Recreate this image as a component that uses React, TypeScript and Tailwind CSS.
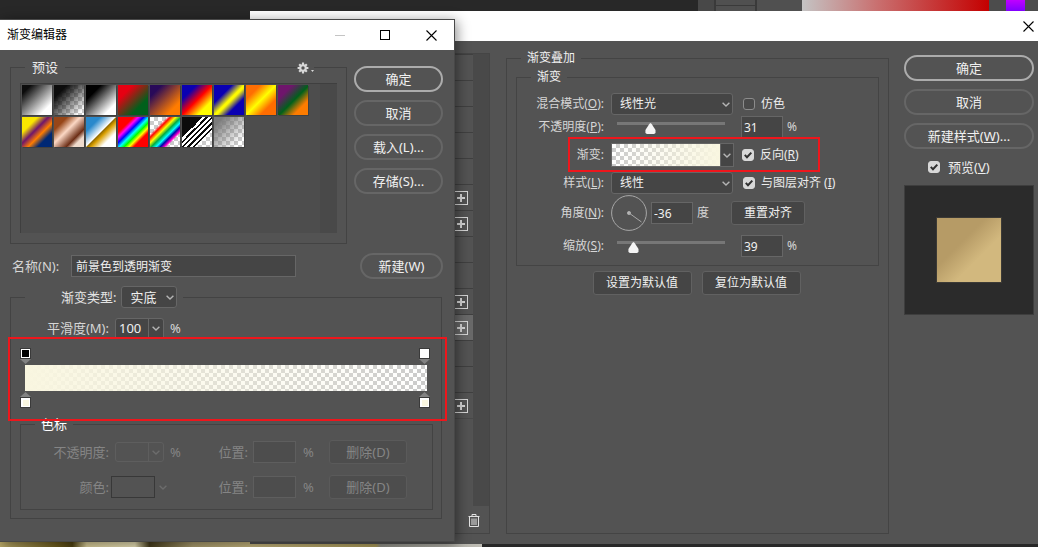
import { ReactNode, useState } from "react";
import { clsx } from "clsx";

const PRESETS = [
  { name: "前景色到背景色渐变", fill: "bg-[linear-gradient(135deg,#0c0c0c_15%,#fff_80%)]" },
  { name: "前景色到透明渐变", fill: "bg-[linear-gradient(135deg,#0c0c0c_22%,#0c0c0c00_90%)]" },
  { name: "黑,白渐变", fill: "bg-[linear-gradient(135deg,#000_25%,#fff_80%)]" },
  { name: "红,绿渐变", fill: "bg-[linear-gradient(135deg,#e60012_25%,#00601b_72%)]" },
  { name: "紫,橙渐变", fill: "bg-[linear-gradient(135deg,#290a59_20%,#ff7c00_78%)]" },
  { name: "蓝,红,黄渐变", fill: "bg-[linear-gradient(135deg,#0a00b2_24%,#ff0000_50%,#fffc00_76%)]" },
  { name: "蓝,黄,蓝渐变", fill: "bg-[linear-gradient(135deg,#0a00b2_30%,#fdfa01_50%,#fdfa01_54%,#0a00b2_72%)]" },
  { name: "橙,黄,橙渐变", fill: "bg-[linear-gradient(135deg,#ff6e02_24%,#ffff00_50%,#ff6d00_74%)]" },
  { name: "紫,绿,橙渐变", fill: "bg-[linear-gradient(135deg,#6f156c_24%,#00601b_52%,#fd7c00_76%)]" },
  { name: "黄,紫,橙,蓝渐变", fill: "bg-[linear-gradient(135deg,#f9e600_26%,#6f156c_44%,#fd7c00_60%,#002874_76%)]" },
  { name: "铜色渐变", fill: "bg-[linear-gradient(135deg,#974618_22%,#fbd8c5_44%,#6c2e16_70%,#efdbcd_82%)]" },
  { name: "铬黄渐变", fill: "bg-[linear-gradient(135deg,#2989cc_24%,#fff_49%,#906a00_51%,#d99f00_58%,#fff_76%)]" },
  { name: "色谱", fill: "bg-[linear-gradient(135deg,#f00_26%,#f0f_34%,#00f_43%,#0ff_52%,#0f0_60%,#ff0_68%,#f00_76%)]" },
  { name: "透明彩虹渐变", fill: "bg-[linear-gradient(135deg,#f000_28%,#f00_34%,#ff0_43%,#0a4_52%,#0ff_60%,#00a_67%,#f0c_74%,#f0c0_78%)]" },
  { name: "透明条纹渐变", fill: "bg-[linear-gradient(135deg,#0c0c0c_35%,#fff_35%,#fff_40%,#0c0c0c_40%,#0c0c0c_44%,#fff_44%,#fff_49%,#0c0c0c_49%,#0c0c0c_53%,#fff_53%,#fff_58%,#0c0c0c_58%,#0c0c0c_62%,#fff_62%,#fff_67%,#0c0c0c_67%,#0c0c0c_71%,transparent_71%)]" },
  { name: "中灰密度", fill: "bg-[linear-gradient(135deg,#7c7c7c_15%,#7c7c7c00_85%)]" },
];

// rows of the layer effect list, "add" ones can be duplicated
const EFFECT_ROWS = [
  { add: false }, { add: false }, { add: false }, { add: false }, { add: false },
  { add: true }, { add: true }, { add: false }, { add: false }, { add: true },
  { add: true, selected: true }, { add: false }, { add: false }, { add: true },
];

const CHECKER = "bg-[repeating-conic-gradient(#cbcbcb_0_25%,#fff_0_50%)] bg-[length:8px_8px]";

function Chevron({ className }: { className?: string }) {
  return (
    <svg viewBox="0 0 8 5" className={clsx("w-2 h-[5px] fill-none stroke-current pointer-events-none", className)} strokeWidth="1.4">
      <path d="M0.6 0.7 4 4 7.4 0.7" />
    </svg>
  );
}

function CloseIcon() {
  return (
    <svg viewBox="0 0 11 11" className="w-[11px] h-[11px] stroke-black" strokeWidth="1.1">
      <path d="M0.5 0.5 10.5 10.5M10.5 0.5 0.5 10.5" />
    </svg>
  );
}

function PillButton({ children, primary, className }: { children: ReactNode; primary?: boolean; className?: string }) {
  return (
    <button
      className={clsx(
        "h-[26px] rounded-full text-[13px] leading-4 text-[#f0f0f0] whitespace-nowrap",
        primary ? "border-2 border-[#acacac]" : "border-2 border-[#666]",
        className
      )}
    >
      {children}
    </button>
  );
}

function FlatButton({ children, disabled, className }: { children: ReactNode; disabled?: boolean; className?: string }) {
  return (
    <button
      disabled={disabled}
      className={clsx(
        "h-6 rounded-[3px] border whitespace-nowrap",
        disabled ? "bg-[#4d4d4d] border-[#5a5a5a] text-[#858585]" : "bg-[#454545] border-[#616161] text-[#f0f0f0]",
        className
      )}
    >
      {children}
    </button>
  );
}

function Select({ id, options, className }: { id: string; options: string[]; className?: string }) {
  return (
    <div className={clsx("relative", className)}>
      <select id={id} className="appearance-none w-full h-[22px] pl-2 rounded-[3px] border border-[#666] bg-[#454545] text-[#f0f0f0] leading-4">
        {options.map((o) => <option key={o}>{o}</option>)}
      </select>
      <Chevron className="absolute right-[3px] top-[9px] text-[#b4b4b4]" />
    </div>
  );
}

function NumberField({ id, value, label }: { id?: string; value: string; label?: string }) {
  return (
    <input id={id} aria-label={label} defaultValue={value} className="w-[42px] h-[22px] px-0.5 border border-[#666] bg-[#454545] text-[#f0f0f0]" />
  );
}

function Slider({ id, value, min, max }: { id: string; value: number; min: number; max: number }) {
  return (
    <div className="relative w-[120px] h-[18px]">
      <span className="absolute inset-x-1.5 top-1 h-[3px] bg-[#777]" />
      <input
        id={id}
        type="range"
        min={min}
        max={max}
        defaultValue={value}
        className="absolute left-0 top-1 w-full h-[14px] appearance-none bg-transparent [&::-webkit-slider-thumb]:appearance-none [&::-webkit-slider-thumb]:w-3 [&::-webkit-slider-thumb]:h-3 [&::-webkit-slider-thumb]:bg-[#f4f4f4] [&::-webkit-slider-thumb]:[clip-path:polygon(50%_0,60%_8%,92%_58%,92%_84%,80%_92%,20%_92%,8%_84%,8%_58%,40%_8%)]"
      />
    </div>
  );
}

function Check({ children, checked, className }: { children: ReactNode; checked?: boolean; className?: string }) {
  const [on, setOn] = useState(!!checked);
  return (
    <label className={clsx("flex items-center whitespace-nowrap text-[#ececec]", className || "gap-1.5")}>
      <span className="relative w-3 h-3">
        <input
          type="checkbox"
          checked={on}
          onChange={() => setOn(!on)}
          className="block appearance-none w-3 h-3 rounded-[3px] border border-[#8c8c8c] bg-[#4a4a4a] checked:bg-[#d8d8d8] checked:border-[#d8d8d8]"
        />
        {on && (
          <svg viewBox="0 0 12 12" className="absolute inset-0 w-3 h-3 fill-none stroke-[#303030] pointer-events-none" strokeWidth="2">
            <path d="M2.8 5.8 5 8.3 9.3 3.6" />
          </svg>
        )}
      </span>
      <span>{children}</span>
    </label>
  );
}

function Field({ id, label, children, className }: { id: string; label: ReactNode; children: ReactNode; className?: string }) {
  return (
    <div className={clsx("relative flex items-center", className)}>
      <label htmlFor={id} className="w-[87px] mr-[7px] text-right text-[#d6d6d6] whitespace-nowrap">{label}</label>
      {children}
    </div>
  );
}

function EffectList() {
  return (
    <div className="w-60 mt-3 mb-2.5 border border-[#454545] flex flex-col">
      <div className="flex-1 flex">
        <ul className="flex-1">
          {EFFECT_ROWS.map((row, i) => (
            <li key={i} className={clsx("h-[26px] pr-[5px] border-t border-[#404040] flex items-center justify-end", row.selected && "bg-[#696969]")}>
              {row.add && (
                <button aria-label="添加效果" className="w-[14px] h-[14px] border border-[#d6d6d6] flex items-center justify-center">
                  <svg viewBox="0 0 8 8" className="w-2 h-2 stroke-[#d6d6d6]" strokeWidth="2">
                    <path d="M4 0V8M0 4H8" />
                  </svg>
                </button>
              )}
            </li>
          ))}
          <li className="border-t border-[#494949]" />
        </ul>
        <div className="w-4 bg-[#494949]" />
      </div>
      <div className="h-[27px] pr-[9px] pt-0.5 flex items-center justify-end">
        <button aria-label="删除效果">
          <svg viewBox="0 0 12 13" className="block w-3 h-[13px] fill-none stroke-[#e2e2e2]" strokeWidth="1">
            <path d="M0.5 2.5H11.5M4 2V0.5H8V2M1.5 3V12.5H10.5V3M4 4.5V11M6 4.5V11M8 4.5V11" />
          </svg>
        </button>
      </div>
    </div>
  );
}

function GradientOverlayPanel() {
  return (
    <fieldset className="flex-1 ml-4 mt-[9px] mb-2.5 border border-[#444] px-[9px] text-xs leading-4">
      <legend className="h-4 ml-[5px] px-1.5 text-[#f0f0f0]">渐变叠加</legend>
      <fieldset className="mt-[3px] border border-[#444] pb-[5px]">
        <legend className="h-4 ml-[14px] px-1.5 text-[#f0f0f0]">渐变</legend>
        <div className="mt-[7px]">
          <Field id="blend" label={<>混合模式(<u>O</u>):</>} className="h-6">
            <Select id="blend" options={["线性光", "正常"]} className="w-[122px] mr-2.5" />
            <Check>仿色</Check>
          </Field>
          <Field id="opacity" label={<>不透明度(<u>P</u>):</>} className="h-[22px]">
            <Slider id="opacity" value={31} min={0} max={100} />
            <div className="ml-2.5 flex items-center gap-1">
              <NumberField value="31" label="不透明度" />
              <span className="text-[#d6d6d6]">%</span>
            </div>
          </Field>
          <Field id="gradient" label="渐变:" className="h-[34px]">
            <button id="gradient" className="w-[123px] h-6 mr-2 border border-[#666] bg-[#454545] flex">
              <span className={clsx("flex-1 h-full", CHECKER)}>
                <span className="block h-full bg-[linear-gradient(90deg,#f9f6e000,#f9f6e0)]" />
              </span>
              <span className="w-[13px] h-full border-l border-[#666] flex items-center justify-center">
                <Chevron className="text-[#b4b4b4]" />
              </span>
            </button>
            <Check checked>反向(<u>R</u>)</Check>
            <span className="absolute left-[51px] -top-px w-[252px] h-[35px] border-2 border-[#ee161c] pointer-events-none" />
          </Field>
          <Field id="style" label={<>样式(<u>L</u>):</>} className="h-[22px]">
            <Select id="style" options={["线性", "径向", "角度"]} className="w-[122px] mr-2.5" />
            <Check checked>与图层对齐 (<u>I</u>)</Check>
          </Field>
          <Field id="angle" label={<>角度(<u>N</u>):</>} className="h-[38px]">
            <svg viewBox="0 0 36 36" className="w-9 h-9 mr-1 fill-none stroke-[#a8a8a8]">
              <circle cx="18" cy="18" r="17.4" />
              <circle cx="18" cy="18" r="1.6" fill="#b8b8b8" />
              <path d="M18 18 30.5 27" />
            </svg>
            <div className="flex items-center gap-1">
              <NumberField id="angle" value="-36" />
              <span className="text-[#d6d6d6]">度</span>
            </div>
            <FlatButton className="ml-[22px] w-[74px]">重置对齐</FlatButton>
          </Field>
          <Field id="scale" label={<>缩放(<u>S</u>):</>} className="h-7">
            <Slider id="scale" value={39} min={1} max={250} />
            <div className="ml-2.5 flex items-center gap-1">
              <NumberField value="39" label="缩放" />
              <span className="text-[#d6d6d6]">%</span>
            </div>
          </Field>
        </div>
      </fieldset>
      <div className="mt-[5px] pr-0.5 flex justify-center gap-2.5">
        <FlatButton className="w-[99px]">设置为默认值</FlatButton>
        <FlatButton className="w-[99px]">复位为默认值</FlatButton>
      </div>
    </fieldset>
  );
}

function LayerStyleDialog() {
  return (
    <section className="absolute left-[250px] right-0 top-[11px] bottom-[3px] bg-[#535353] flex flex-col">
      <header className="h-[30px] pr-1 bg-white flex items-center justify-end">
        <button aria-label="关闭"><CloseIcon /></button>
      </header>
      <div className="flex-1 flex">
        <EffectList />
        <GradientOverlayPanel />
        <div className="w-[130px] ml-[15px] mr-1 pt-[14px] flex flex-col text-[13px] leading-4">
          <div className="flex flex-col gap-2">
            <PillButton primary>确定</PillButton>
            <PillButton>取消</PillButton>
            <PillButton>新建样式(<u>W</u>)...</PillButton>
          </div>
          <div className="h-9 pl-6 flex items-center">
            <Check checked className="gap-2">预览(<u>V</u>)</Check>
          </div>
          <div className="h-[130px] border border-[#3e3e3e] bg-[#2b2b2b] flex items-center justify-center">
            <div className="w-[66px] h-[66px] border border-[#3c3a36] bg-[linear-gradient(135deg,#b69b66_38%,#d2b87e_64%)]" />
          </div>
        </div>
      </div>
    </section>
  );
}

function PresetPicker() {
  return (
    <fieldset className="relative w-[337px] border border-[#434343] px-[9px] pb-2.5">
      <legend className="h-4 ml-[5px] px-[7px] text-[#ececec]">预设</legend>
      <button aria-label="预设菜单" className="absolute right-8 -top-[15px] h-4 bg-[#535353] flex items-center gap-0.5">
        <svg viewBox="0 0 12 12" className="w-3 h-3">
          <g stroke="#d8d8d8" strokeWidth="2.2">
            <path d="M6 0.6V11.4M0.6 6H11.4M2.2 2.2 9.8 9.8M9.8 2.2 2.2 9.8" />
          </g>
          <circle cx="6" cy="6" r="3.8" fill="#d8d8d8" />
          <circle cx="6" cy="6" r="1.7" fill="#535353" />
        </svg>
        <svg viewBox="0 0 3 2" className="w-[3px] h-0.5 mt-1.5 fill-[#d8d8d8]">
          <path d="M0 0H3L1.5 2Z" />
        </svg>
      </button>
      <div className="mt-2 min-h-[150px] border-t border-l border-[#3f3f3f] bg-[#4d4d4d] flex">
        <div className="flex-1 p-px flex flex-wrap content-start gap-0.5">
          {PRESETS.map((p) => (
            <button key={p.name} title={p.name} className={clsx("w-[30px] h-[30px] shadow-[1px_1px_0_#404040]", CHECKER)}>
              <span className={clsx("block w-full h-full", p.fill)} />
            </button>
          ))}
        </div>
        <div className="w-[17px] bg-[#494949]" />
      </div>
    </fieldset>
  );
}

function Stop({ down, fill }: { down?: boolean; fill: string }) {
  return (
    <button aria-label="色标" className="-ml-[5px] -mr-[3px]">
      <svg viewBox="0 0 11 17" className={clsx("block w-[11px] h-[17px]", fill)}>
        {down ? (
          <>
            <path d="M0 11H11L5.5 16Z" fill="#828282" />
            <rect x="0.5" y="0.5" width="10" height="10" fill="#fff" stroke="#3a3a3a" />
            <rect x="2" y="2" width="7" height="7" />
          </>
        ) : (
          <>
            <path d="M0 6H11L5.5 1Z" fill="#828282" />
            <rect x="0.5" y="6.5" width="10" height="10" fill="#fff" stroke="#3a3a3a" />
            <rect x="3" y="9" width="6" height="6" />
          </>
        )}
      </svg>
    </button>
  );
}

function StopEditor() {
  return (
    <div className="relative px-[14px] pt-2.5 pb-2">
      <div className="flex justify-between">
        <Stop down fill="fill-black" />
        <Stop down fill="fill-white" />
      </div>
      <div className={clsx("h-[26px]", CHECKER)}>
        <div className="h-full bg-[linear-gradient(90deg,#f9f6e0,#f9f6e000)]" />
      </div>
      <div className="flex justify-between">
        <Stop fill="fill-[#f9f6e0]" />
        <Stop fill="fill-[#f9f6e0]" />
      </div>
      <span className="absolute -left-[3px] -right-1.5 -top-px -bottom-[5px] z-10 border-2 border-[#ee161c] pointer-events-none" />
    </div>
  );
}

function PositionFields({ id }: { id: string }) {
  return (
    <>
      <label htmlFor={id} className="ml-auto">位置:</label>
      <input id={id} disabled className="ml-[5px] w-[43px] h-[22px] border border-[#5e5e5e] bg-[#4d4d4d]" />
      <span className="ml-[7px] w-[26px]">%</span>
      <FlatButton disabled className="w-[78px] mr-[25px]">删除(D)</FlatButton>
    </>
  );
}

function GradientEditorDialog() {
  return (
    <section className="absolute left-0 top-[19px] w-[455px] border-t border-r border-b border-[#484848] bg-[#535353] shadow-[2px_2px_12px_rgba(0,0,0,0.45)] text-[13px] leading-4">
      <header className="h-[30px] pl-[7px] pr-[17px] bg-white flex items-center">
        <h1 className="flex-1 text-xs text-black">渐变编辑器</h1>
        <button aria-label="最小化" className="mr-[35px]"><span className="block w-2.5 h-px bg-[#c4c4c4]" /></button>
        <button aria-label="最大化" className="mr-9"><span className="block w-2.5 h-2.5 border border-black" /></button>
        <button aria-label="关闭"><CloseIcon /></button>
      </header>
      <div className="pt-[9px] pl-2.5 pr-[11px] pb-[22px]">
        <div className="flex items-start justify-between">
          <PresetPicker />
          <div className="w-[89px] pt-[7px] flex flex-col gap-2">
            <PillButton primary>确定</PillButton>
            <PillButton>取消</PillButton>
            <PillButton>载入(L)...</PillButton>
            <PillButton>存储(S)...</PillButton>
          </div>
        </div>
        <div className="mt-[9px] flex items-center">
          <label htmlFor="name" className="w-[61px] pl-0.5 text-[#d6d6d6]">名称(N):</label>
          <input id="name" defaultValue="前景色到透明渐变" className="w-[225px] h-[22px] px-1 border border-[#666] bg-[#454545] text-xs text-[#f0f0f0]" />
          <PillButton className="ml-auto w-[83px]">新建(W)</PillButton>
        </div>

        <fieldset className="mt-[7px] mr-px border border-[#434343] pb-2">
          <legend className="h-[22px] ml-[14px] pl-9 pr-1.5">
            <span className="flex items-center gap-[5px]">
              <label htmlFor="type" className="text-[#e4e4e4]">渐变类型:</label>
              <Select id="type" options={["实底", "杂色"]} className="w-14" />
            </span>
          </legend>
          <div className="mt-2.5 flex items-center">
            <label htmlFor="smooth" className="w-[98px] mr-1.5 text-right text-[#d6d6d6]">平滑度(M):</label>
            <span className="flex w-[49px] h-5 rounded-t-[3px] border border-[#666] bg-[#454545]">
              <input id="smooth" defaultValue="100" className="min-w-0 flex-1 pl-[3px] text-[#f0f0f0]" />
              <button aria-label="平滑度选项" className="w-[15px] border-l border-[#666] flex items-center justify-center">
                <Chevron className="text-[#b4b4b4]" />
              </button>
            </span>
            <span className="ml-1.5 text-[#d6d6d6]">%</span>
          </div>

          <StopEditor />

          <fieldset className="ml-[9px] mr-2 border border-[#434343] pt-2 pb-2.5 flex flex-col gap-[11px] text-[#858585]">
            <legend className="h-4 ml-[14px] px-1.5 text-white">色标</legend>
            <div className="h-6 flex items-center">
              <label htmlFor="stopOpacity" className="w-[88px] mr-1.5 text-right">不透明度:</label>
              <span className="flex w-[49px] h-5 rounded-[3px] border border-[#5e5e5e]">
                <input id="stopOpacity" disabled className="min-w-0 flex-1" />
                <span className="w-[15px] border-l border-[#5e5e5e] flex items-center justify-center">
                  <Chevron className="text-[#6c6c6c]" />
                </span>
              </span>
              <span className="ml-1.5">%</span>
              <PositionFields id="opacityPos" />
            </div>
            <div className="h-6 flex items-center">
              <label htmlFor="stopColor" className="w-[88px] mr-0.5 text-right">颜色:</label>
              <button id="stopColor" disabled className="w-11 h-[22px] border border-[#383838]" />
              <Chevron className="ml-1 text-[#6c6c6c]" />
              <PositionFields id="colorPos" />
            </div>
          </fieldset>
        </fieldset>
      </div>
    </section>
  );
}

export default function App() {
  return (
    <main className="relative min-h-screen overflow-hidden bg-[#282828] flex flex-col justify-between font-['Noto_Sans','Noto_Sans_CJK_SC',sans-serif]">
      {/* strip of the colour panel behind the dialogs */}
      <div className="h-[11px] flex justify-end bg-[#282828]">
        <div className="w-4 bg-[#484848]" />
        <div className="w-[43px] border-x-2 border-[#3a3a3a] bg-[#505050] pt-[5px]">
          <div className="h-px bg-[#3a3a3a]" />
        </div>
        <div className="w-[45px] bg-[#505050]" />
        <div className="w-[187px] bg-[linear-gradient(90deg,#c4c4c4,#c97070_40%,#c40000)]" />
        <div className="w-[17px] bg-[#4c4c4c]" />
        <div className="w-[19px] bg-[linear-gradient(#c000ff,#8000ff)]" />
        <div className="w-[13px] bg-[#4c4c4c]" />
      </div>
      <div className="h-1.5 w-[482px] bg-[linear-gradient(90deg,#b8a868,#6b5a1c_12%,#4f4212_15%,#d8cc98_18%,#e6deb4_28%,#453c1c_31%,#a89a6c_40%,#c4b47c_52%,#a89858_78%,#8e8e86_79%,#c0beb6)]" />
      <LayerStyleDialog />
      <GradientEditorDialog />
    </main>
  );
}
